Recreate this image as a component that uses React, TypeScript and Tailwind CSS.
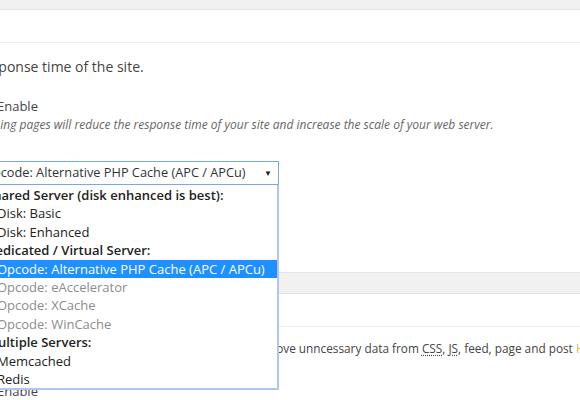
import React from 'react'

type Opt = { label: string; group?: boolean; disabled?: boolean; selected?: boolean }

const options: Opt[] = [
  { label: 'Shared Server (disk enhanced is best):', group: true },
  { label: 'Disk: Basic' },
  { label: 'Disk: Enhanced' },
  { label: 'Dedicated / Virtual Server:', group: true },
  { label: 'Opcode: Alternative PHP Cache (APC / APCu)', selected: true },
  { label: 'Opcode: eAccelerator', disabled: true },
  { label: 'Opcode: XCache', disabled: true },
  { label: 'Opcode: WinCache', disabled: true },
  { label: 'Multiple Servers:', group: true },
  { label: 'Memcached' },
  { label: 'Redis' },
]

function Option({ opt }: { opt: Opt }) {
  const base = 'h-[18.4px] whitespace-nowrap leading-[18.4px]'
  if (opt.group) {
    return <div className={`${base} pl-[14px] font-semibold text-[#222]`}>{opt.label}</div>
  }
  if (opt.selected) {
    return <div className={`${base} bg-[#1e90ff] pl-[25px] text-white`}>{opt.label}</div>
  }
  return (
    <div className={`${base} pl-[25px] ${opt.disabled ? 'text-[#8d8d8d]' : 'text-[#222]'}`}>
      {opt.label}
    </div>
  )
}

export default function App() {
  return (
    <div className="relative h-[400px] w-[580px] overflow-hidden bg-[#f1f1f1] font-['Open_Sans',sans-serif] text-[14px] text-[#444]">
      <div className="mt-[9px] border-y border-[#e5e5e5] bg-white">
        <div className="h-[33px] border-b border-[#eee]" />
        <div className="pb-[87px] pt-[14px]">
          <p className="-ml-[263px] h-[19px] whitespace-nowrap leading-[19px]">
            Enable page caching to decrease the response time of the site.
          </p>
          <label className="mt-[21px] -ml-[23px] flex h-[19px] items-center gap-[4px] text-[13px] leading-[19px]">
            <span className="h-[16px] w-[16px] shrink-0 border border-[#b4b9be] bg-white" />
            Enable
          </label>
          <p className="-ml-[26px] h-[17px] whitespace-nowrap text-[12px] italic leading-[17px] text-[#666]">
            Caching pages will reduce the response time of your site and increase the scale of your web server.
          </p>
          <div className="mt-[28px] -ml-[26px] flex h-[24px] w-[305px] items-center justify-between border border-[#7aa7e6] bg-white pl-[8px] pr-[6px] text-[12.75px] text-[#333]">
            <span className="whitespace-nowrap">Opcode: Alternative PHP Cache (APC / APCu)</span>
            <span className="text-[8px] text-[#222]">▼</span>
          </div>
        </div>
      </div>

      <div className="mt-[20px] border-y border-[#e5e5e5] bg-white">
        <div className="h-[33px] border-b border-[#eee]" />
        <div className="pb-[20px] pt-[12px]">
          <p className="ml-[176px] h-[19px] whitespace-nowrap text-[11.8px] leading-[19px]">
            Automatically remove unncessary data from{' '}
            <abbr className="underline decoration-dotted underline-offset-2">CSS</abbr>,{' '}
            <abbr className="underline decoration-dotted underline-offset-2">JS</abbr>, feed, page and post{' '}
            <span className="text-[#e2b348]">HTML</span>.
          </p>
          <label className="mt-[24px] -ml-[23px] flex h-[19px] items-center gap-[4px] text-[13px] leading-[19px]">
            <span className="h-[16px] w-[16px] shrink-0 border border-[#b4b9be] bg-white" />
            Enable
          </label>
        </div>
      </div>

      <div className="absolute left-[-30px] top-[185px] w-[309px] border-2 border-t-0 border-[#b0c6ee] bg-white pt-[1px] text-[13px]">
        {options.map((o) => (
          <Option key={o.label} opt={o} />
        ))}
      </div>
    </div>
  )
}
